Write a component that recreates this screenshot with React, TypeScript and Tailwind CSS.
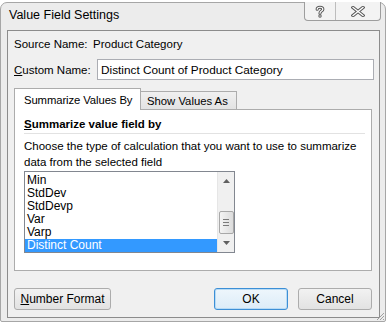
const items = ["Min", "StdDev", "StdDevp", "Var", "Varp", "Distinct Count"];

function HelpGlyph() {
  return (
    <svg width="10" height="13" viewBox="0 0 10 13">
      <path d="M2.2 4.2 C2.2 1.6 7.8 1.6 7.8 4.2 C7.8 6 5 6.2 5 8.2" fill="none" stroke="#5a5a5a" strokeWidth="3.2" strokeLinecap="round" />
      <circle cx="5" cy="11" r="1.7" fill="#5a5a5a" />
      <path d="M2.2 4.2 C2.2 1.6 7.8 1.6 7.8 4.2 C7.8 6 5 6.2 5 8.2" fill="none" stroke="#ffffff" strokeWidth="1.2" strokeLinecap="round" />
      <circle cx="5" cy="11" r="0.7" fill="#ffffff" />
    </svg>
  );
}

function CloseGlyph() {
  return (
    <svg width="14" height="11" viewBox="0 0 14 11">
      <path d="M2 1.5 L12 9.5 M12 1.5 L2 9.5" stroke="#5a5a5a" strokeWidth="3.4" strokeLinecap="square" />
      <path d="M2 1.5 L12 9.5 M12 1.5 L2 9.5" stroke="#ffffff" strokeWidth="1.3" strokeLinecap="square" />
    </svg>
  );
}

function Scrollbar() {
  return (
    <div className="w-[17px] h-full bg-[#f0f0f0] border-l border-[#e6e6e6] flex flex-col items-center">
      <div className="h-[17px] w-full flex items-center justify-center">
        <svg width="7" height="4" viewBox="0 0 7 4"><path d="M0 4 L3.5 0 L7 4 Z" fill="#606060" /></svg>
      </div>
      <div className="flex-1 w-full" />
      <div className="h-[23px] w-[15px] rounded-[2px] border border-[#a8a8a8] bg-gradient-to-r from-[#f4f4f4] to-[#dcdcdc] flex flex-col items-center justify-center gap-[2px]">
        <div className="w-[6px] h-px bg-[#7a7a7a]" />
        <div className="w-[6px] h-px bg-[#7a7a7a]" />
        <div className="w-[6px] h-px bg-[#7a7a7a]" />
      </div>
      <div className="h-[18px] w-full flex items-center justify-center">
        <svg width="7" height="4" viewBox="0 0 7 4"><path d="M0 0 L3.5 4 L7 0 Z" fill="#606060" /></svg>
      </div>
    </div>
  );
}

function Button({ children, w, isDefault = false }: { children: React.ReactNode; w: string; isDefault?: boolean }) {
  return (
    <button
      className={`${w} h-[22px] rounded-[3px] border flex items-center justify-center leading-[16px] text-[12px] ${
        isDefault
          ? "border-[#3c8fd6] bg-gradient-to-b from-[#eef6fc] to-[#dcecf8] shadow-[inset_0_0_0_1px_#b8dbf5]"
          : "border-[#acacac] bg-gradient-to-b from-[#f2f2f2] to-[#e2e2e2]"
      }`}
    >
      {children}
    </button>
  );
}

export default function App() {
  return (
    <div className="w-[388px] h-[324px] bg-white text-black font-['Liberation_Sans',Arial,sans-serif] text-[11.5px] leading-[16px] overflow-hidden">
      <div className="relative mt-[2px] w-[386px] h-[320px] rounded-t-[7px] rounded-b-[2px] border border-[#a6a6a6] bg-[#ececec] flex flex-col">
        {/* title bar */}
        <div className="h-[27px] flex items-start">
          <div className="pl-[8px] pt-[4px] text-[12.5px] leading-[16px]">Value Field Settings</div>
          <div className="ml-auto mr-[4px] -mt-px flex h-[19px] border border-t-0 border-[#9d9d9d] rounded-b-[4px] bg-[#f3f3f3]">
            <div className="w-[31px] flex items-center justify-center border-r border-[#bdbdbd]">
              <HelpGlyph />
            </div>
            <div className="w-[44px] flex items-center justify-center">
              <CloseGlyph />
            </div>
          </div>
        </div>

        {/* client area */}
        <div className="ml-[6px] w-[373px] h-[288px] border border-[#8c8c8c] bg-[#f0f0f0] flex flex-col pl-[6px]">
          <div className="mt-[5px] flex">
            <span className="w-[79px]">Source Name:</span>
            <span>Product Category</span>
          </div>

          <div className="mt-[7px] flex items-center">
            <span className="w-[83px]">
              <span className="underline">C</span>ustom Name:
            </span>
            <div className="w-[277px] h-[21px] border border-[#abadb3] bg-white pl-[3px] flex items-center text-[11.8px]">
              Distinct Count of Product Category
            </div>
          </div>

          {/* tabs */}
          <div className="mt-[8px] flex items-end">
            <div className="relative z-10 -mb-px w-[127px] h-[22px] border border-b-0 border-[#acacac] bg-white pl-[9px] pt-[3px] text-[11.3px] tracking-[-0.1px]">
              Summarize Values By
            </div>
            <div className="w-[96px] h-[18px] border border-l-0 border-b-0 border-[#acacac] bg-gradient-to-b from-[#f0f0f0] to-[#e3e3e3] pl-[6px] pt-px text-[11.3px]">
              Show Values As
            </div>
          </div>

          <div className="w-[358px] h-[162px] border border-[#acacac] bg-white pl-[9px] flex flex-col">
            <div className="mt-[6px] font-bold text-[11.5px]">
              <span className="underline">S</span>ummarize value field by
            </div>
            <div className="mt-px w-[341px] h-px bg-[#e2e2e2]" />
            <div className="mt-[4px] w-[345px] leading-[16px]">
              Choose the type of calculation that you want to use to summarize data from the selected field
            </div>
            <div className="mt-px w-[211px] h-[82px] border border-[#828790] bg-white flex">
              <div className="flex-1 pt-[2px] text-[12px]">
                {items.map((it) => (
                  <div
                    key={it}
                    className={`h-[13px] leading-[13px] pl-[2px] ${it === "Distinct Count" ? "bg-[#3399ff] text-white" : ""}`}
                  >
                    {it}
                  </div>
                ))}
              </div>
              <Scrollbar />
            </div>
          </div>

          <div className="mt-[17px] flex items-center">
            <Button w="w-[97px]">
              <span>
                <span className="underline">N</span>umber Format
              </span>
            </Button>
            <div className="ml-auto mr-[7px] flex gap-[10px]">
              <Button w="w-[74px]" isDefault>
                OK
              </Button>
              <Button w="w-[74px]">Cancel</Button>
            </div>
          </div>
        </div>

        {/* resize grip */}
        <svg className="absolute right-0 bottom-0" width="10" height="10" viewBox="0 0 10 10">
          <path d="M9 2 L2 9 M9 5 L5 9 M9 8 L8 9" stroke="#a0a0a0" strokeWidth="1" />
        </svg>
      </div>
    </div>
  );
}
